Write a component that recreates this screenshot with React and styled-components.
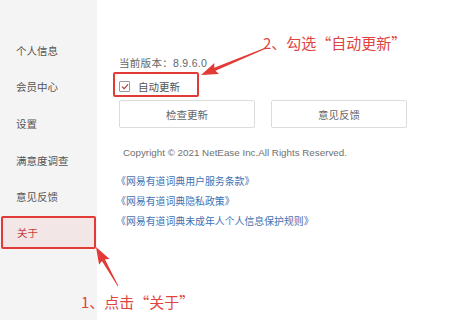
import React from "react";
import styled, { createGlobalStyle } from "styled-components";

const GlobalStyle = createGlobalStyle`
  html, body {
    margin: 0;
    padding: 0;
    background: #fff;
    overflow: hidden;
  }
  body {
    font-family: "Liberation Sans", "Noto Sans CJK SC", sans-serif;
  }
`;

const RED = "#e23a36";

const menu = ["个人信息", "会员中心", "设置", "满意度调查", "意见反馈", "关于"];
const links = [
  "《网易有道词典用户服务条款》",
  "《网易有道词典隐私政策》",
  "《网易有道词典未成年人个人信息保护规则》",
];

const Window = styled.div`
  position: relative;
  width: 470px;
  height: 320px;
  display: flex;
  background: #fff;
`;

const Sidebar = styled.nav`
  width: 97px;
  height: 100%;
  background: #f4f4f4;
  padding-top: 32px;
  box-sizing: border-box;
  display: flex;
  flex-direction: column;
`;

const MenuItem = styled.div`
  height: 36.6px;
  display: flex;
  align-items: center;
  padding-left: 16px;
  font-size: 10.5px;
  color: ${({ active }) => (active ? "#c8403c" : "#555")};
  box-sizing: border-box;
  ${({ active }) =>
    active &&
    `
    margin: 1px 1px 0 1px;
    height: 33px;
    padding-left: 14px;
    background: #f2e6e6;
    border: 2px solid ${RED};
    border-radius: 2px;
  `}
`;

const Main = styled.main`
  flex: 1;
  padding: 56px 0 0 22px;
  display: flex;
  flex-direction: column;
  align-items: flex-start;
`;

const Version = styled.div`
  font-size: 10.5px;
  line-height: 14px;
  color: #666;
  letter-spacing: 0.3px;
`;

const Highlight = styled.label`
  margin: 2px 0 0 -6px;
  width: 86px;
  height: 25px;
  box-sizing: border-box;
  border: 2px solid ${RED};
  border-radius: 2px;
  display: flex;
  align-items: center;
  gap: 8px;
  padding: 3px 0 0 4px;
  font-size: 10.5px;
  color: #555;
`;

const Box = styled.span`
  width: 11px;
  height: 11px;
  box-sizing: border-box;
  border: 1px solid #9a9a9a;
  border-radius: 1px;
  display: flex;
  align-items: center;
  justify-content: center;
  background: #fff;
`;

const Buttons = styled.div`
  margin-top: 3px;
  display: flex;
  gap: 16px;
`;

const Button = styled.button`
  width: 136px;
  height: 28px;
  background: #fff;
  border: 1px solid #dcdcdc;
  border-radius: 2px;
  font-family: inherit;
  font-size: 10.5px;
  color: #666;
  padding: 0;
`;

const Copyright = styled.div`
  margin: 18px 0 0 4px;
  font-size: 9.8px;
  line-height: 14px;
  color: #707070;
`;

const Links = styled.div`
  margin: 15px 0 0 -3px;
  display: flex;
  flex-direction: column;
  gap: 6px;
`;

const Link = styled.a`
  font-size: 9.9px;
  line-height: 14px;
  color: #3f72b3;
  text-decoration: none;
`;

const Note = styled.div`
  position: absolute;
  left: ${({ x }) => x}px;
  top: ${({ y }) => y}px;
  font-family: "Noto Sans CJK SC", sans-serif;
  font-size: 15px;
  line-height: 18px;
  color: #e0443f;
  white-space: nowrap;
`;

const Overlay = styled.svg`
  position: absolute;
  left: 0;
  top: 0;
  pointer-events: none;
`;

function arrowPoints(x1, y1, x2, y2) {
  const dx = x2 - x1;
  const dy = y2 - y1;
  const len = Math.hypot(dx, dy);
  const ux = dx / len;
  const uy = dy / len;
  const nx = -uy;
  const ny = ux;
  const head = 15;
  const hw = 6;
  const sw = 1.7;
  const bx = x2 - ux * head;
  const by = y2 - uy * head;
  const pts = [
    [x1 + nx * 0.4, y1 + ny * 0.4],
    [bx + nx * sw, by + ny * sw],
    [bx - ux * 2 + nx * hw, by - uy * 2 + ny * hw],
    [x2, y2],
    [bx - ux * 2 - nx * hw, by - uy * 2 - ny * hw],
    [bx - nx * sw, by - ny * sw],
    [x1 - nx * 0.4, y1 - ny * 0.4],
  ];
  return pts.map((p) => p.map((v) => v.toFixed(1)).join(",")).join(" ");
}

const App = () => (
  <>
    <GlobalStyle />
    <Window>
      <Sidebar>
        {menu.map((item) => (
          <MenuItem key={item} active={item === "关于"}>
            {item}
          </MenuItem>
        ))}
      </Sidebar>

      <Main>
        <Version>当前版本：8.9.6.0</Version>
        <Highlight>
          <Box>
            <svg width="8" height="7" viewBox="0 0 8 7">
              <path d="M1 3.6 L3.2 5.6 L7 1.4" fill="none" stroke="#a5343a" strokeWidth="1.1" />
            </svg>
          </Box>
          自动更新
        </Highlight>
        <Buttons>
          <Button>检查更新</Button>
          <Button>意见反馈</Button>
        </Buttons>
        <Copyright>Copyright © 2021 NetEase Inc.All Rights Reserved.</Copyright>
        <Links>
          {links.map((l) => (
            <Link key={l} href="#">{l}</Link>
          ))}
        </Links>
      </Main>

      <Note x={263} y={34}>2、勾选“自动更新”</Note>
      <Note x={81} y={293}>1、点击“关于”</Note>

      <Overlay width="470" height="320">
        <polygon points={arrowPoints(266, 48, 201, 75)} fill={RED} />
        <polygon points={arrowPoints(118, 286, 96, 247)} fill={RED} />
      </Overlay>
    </Window>
  </>
);

export default App;
